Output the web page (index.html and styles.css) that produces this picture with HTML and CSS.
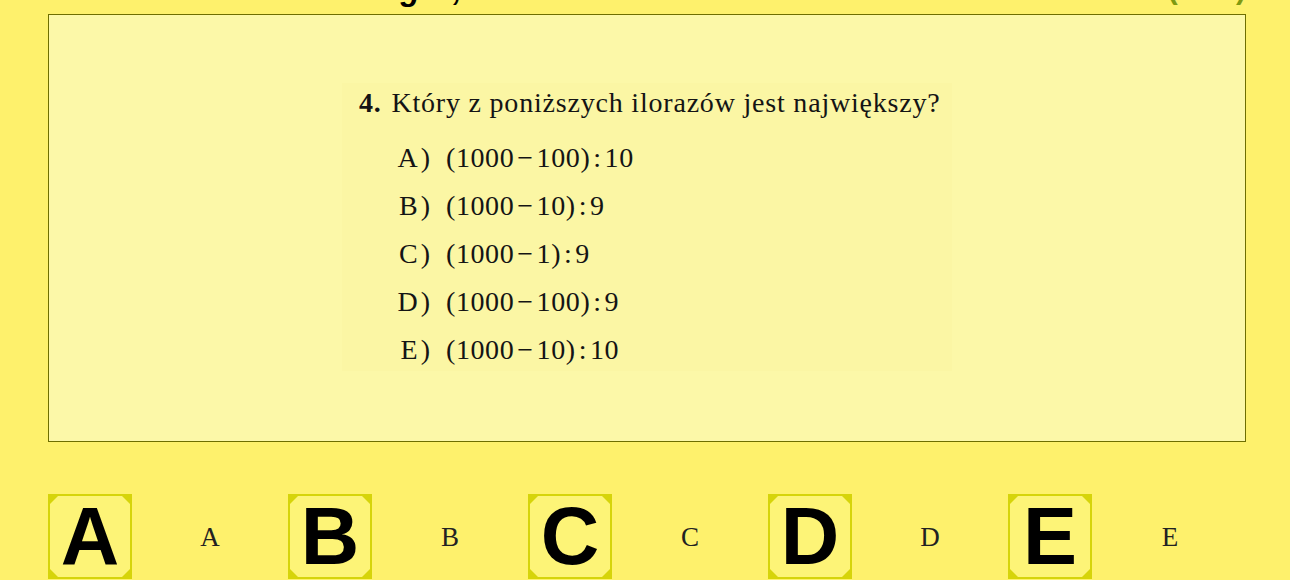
FILE: index.html
```html
<!DOCTYPE html>
<html lang="pl">
<head>
<meta charset="utf-8">
<title>Zadanie 4</title>
<link rel="stylesheet" href="styles.css">
</head>
<body>
<div class="page">
  <header class="top">
    <h1 class="title">Kangur, zadanie 4</h1>
    <span class="points">(4/10)</span>
  </header>
  <section class="task">
    <div class="sheet">
      <p class="question"><b>4.</b> Który z poniższych ilorazów jest największy?</p>
      <ol class="options">
        <li><span class="lbl">A)</span><span class="expr">(1000&#8202;&minus;&#8202;100)&#8202;:&#8202;10</span></li>
        <li><span class="lbl">B)</span><span class="expr">(1000&#8202;&minus;&#8202;10)&#8202;:&#8202;9</span></li>
        <li><span class="lbl">C)</span><span class="expr">(1000&#8202;&minus;&#8202;1)&#8202;:&#8202;9</span></li>
        <li><span class="lbl">D)</span><span class="expr">(1000&#8202;&minus;&#8202;100)&#8202;:&#8202;9</span></li>
        <li><span class="lbl">E)</span><span class="expr">(1000&#8202;&minus;&#8202;10)&#8202;:&#8202;10</span></li>
      </ol>
    </div>
  </section>
  <div class="answers">
    <div class="answer"><button class="key"><span class="key-face">A</span></button><span class="key-label">A</span></div>
    <div class="answer"><button class="key"><span class="key-face">B</span></button><span class="key-label">B</span></div>
    <div class="answer"><button class="key"><span class="key-face">C</span></button><span class="key-label">C</span></div>
    <div class="answer"><button class="key"><span class="key-face">D</span></button><span class="key-label">D</span></div>
    <div class="answer"><button class="key"><span class="key-face">E</span></button><span class="key-label">E</span></div>
  </div>
</div>
</body>
</html>
```

FILE: styles.css
```css
html, body {
  margin: 0;
  padding: 0;
  background: #fef16c;
  overflow: hidden;
}

.page {
  padding-left: 48px;
  width: 1198px;
}

.top {
  height: 14px;
  display: flex;
  justify-content: space-between;
  align-items: flex-start;
}

.title {
  margin: -27px 0 0 289px;
  font-family: "Liberation Sans", Arial, sans-serif;
  font-weight: bold;
  font-style: italic;
  font-size: 32px;
  line-height: 32px;
  letter-spacing: 1px;
  color: #000;
  white-space: nowrap;
}

.points {
  margin: -27px 0 0 0;
  font-family: "Liberation Sans", Arial, sans-serif;
  font-weight: bold;
  font-size: 30px;
  line-height: 32px;
  color: #7f9a12;
  white-space: nowrap;
}

.task {
  height: 426px;
  border: 1px solid #6e6e00;
  background: #fcf8a8;
  display: flex;
  align-items: center;
  justify-content: center;
}

.sheet {
  width: 610px;
  height: 288px;
  margin-top: -2px;
  background: #fbf6a4;
  box-sizing: border-box;
  padding: 2px 0 0 17px;
  font-family: "Liberation Serif", "Times New Roman", serif;
  color: #141414;
}

.question {
  margin: 0;
  font-size: 28px;
  line-height: 36px;
  white-space: nowrap;
  letter-spacing: 0.8px;
}

.question b {
  margin-right: 2px;
}

.options {
  list-style: none;
  margin: 13px 0 0 0;
  padding: 0;
  font-size: 28px;
  line-height: 48px;
}

.options li {
  display: flex;
  white-space: nowrap;
}

.lbl {
  width: 74px;
  text-align: right;
  flex: none;
  letter-spacing: 3px;
}

.expr {
  margin-left: 13px;
  letter-spacing: 0.6px;
}

.answers {
  margin-top: 52px;
  display: flex;
}

.answer {
  width: 240px;
  flex: none;
  display: flex;
  align-items: center;
}

.key {
  width: 84px;
  height: 85px;
  padding: 2px;
  margin: 0;
  border: 0;
  background: #d6d40a;
  flex: none;
  display: block;
  cursor: pointer;
}

.key-face {
  display: flex;
  align-items: center;
  justify-content: center;
  width: 100%;
  height: 100%;
  background: #fdf477;
  clip-path: polygon(8px 0, calc(100% - 8px) 0, 100% 8px, 100% calc(100% - 8px), calc(100% - 8px) 100%, 8px 100%, 0 calc(100% - 8px), 0 8px);
  font-family: "Liberation Sans", Arial, sans-serif;
  font-weight: bold;
  font-size: 81px;
  line-height: 1;
  color: #000;
}

.key-label {
  width: 156px;
  text-align: center;
  font-family: "Liberation Serif", "Times New Roman", serif;
  font-size: 27px;
  color: #222;
  padding-top: 2px;
}
```
